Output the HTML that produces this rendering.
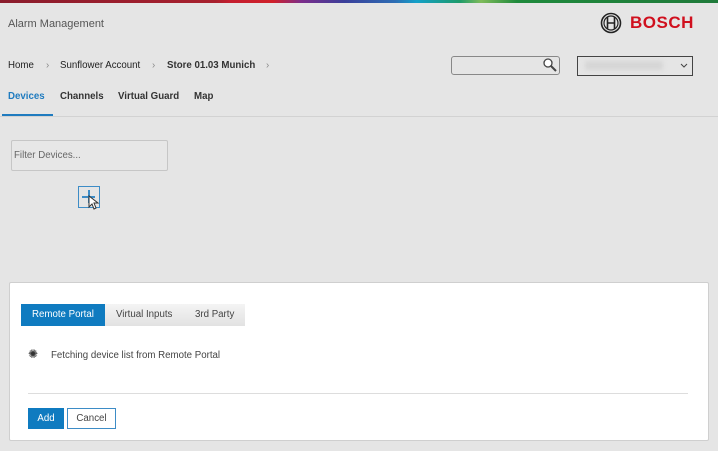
<!DOCTYPE html>
<html><head><style>
body{margin:0;width:718px;height:451px;background:#e5e5e5;font-family:"Liberation Sans",sans-serif;position:relative;overflow:hidden;font-size:9.7px;color:#222}
.a{position:absolute}
</style></head><body>
<div class="a" style="left:0;top:0;width:718px;height:3px;background:linear-gradient(90deg,#8a1c2c 0%,#a8202e 30%,#c41e2f 32%,#d0202a 38%,#7b2d8b 42%,#3a3f9a 48%,#2d6db4 55%,#14a0c8 58%,#1d9b6b 64%,#7fbb5a 67%,#1f8a3c 72%,#1f7a3a 100%)"></div>
<div class="a" style="left:8px;top:18px;font-size:11px;color:#555">Alarm Management</div>
<svg class="a" style="left:600px;top:12px" width="22" height="22" viewBox="0 0 22 22"><circle cx="11" cy="11" r="9.5" fill="none" stroke="#222" stroke-width="1.6"/><circle cx="11" cy="11" r="7" fill="none" stroke="#222" stroke-width="1.2"/><path d="M7.5 5v12M14.5 5v12M7.5 11h7" stroke="#222" stroke-width="1.6" fill="none"/></svg>
<div class="a" style="left:630px;top:13px;font-size:17px;font-weight:bold;color:#d0101e;letter-spacing:0.5px">BOSCH</div>
<div class="a" style="left:8px;top:60px">Home</div>
<div class="a" style="left:46px;top:60px;color:#888">›</div>
<div class="a" style="left:60px;top:60px">Sunflower Account</div>
<div class="a" style="left:152px;top:60px;color:#888">›</div>
<div class="a" style="left:167px;top:60px;font-weight:bold;color:#333">Store 01.03 Munich</div>
<div class="a" style="left:266px;top:60px;color:#888">›</div>
<div class="a" style="left:451px;top:56px;width:107px;height:17px;border:1px solid #888;border-radius:3px"></div>
<svg class="a" style="left:542px;top:57px" width="16" height="16" viewBox="0 0 16 16"><circle cx="6" cy="6" r="4" fill="#fff" stroke="#444" stroke-width="1.3"/><path d="M9 9l5 5" stroke="#444" stroke-width="2"/></svg>
<div class="a" style="left:577px;top:56px;width:114px;height:18px;border:1px solid #444"></div>
<div class="a" style="left:585px;top:61px;width:78px;height:9px;background:#d6d6d6;filter:blur(2px)"></div>
<svg class="a" style="left:680px;top:63px" width="8" height="5" viewBox="0 0 8 5"><path d="M1 1l3 3 3-3" fill="none" stroke="#444" stroke-width="1"/></svg>
<div class="a" style="left:8px;top:91px;font-weight:bold;color:#1f7bbf">Devices</div>
<div class="a" style="left:60px;top:91px;font-weight:bold;color:#333">Channels</div>
<div class="a" style="left:118px;top:91px;font-weight:bold;color:#333">Virtual Guard</div>
<div class="a" style="left:194px;top:91px;font-weight:bold;color:#333">Map</div>
<div class="a" style="left:2px;top:114px;width:51px;height:2px;background:#1f7bbf"></div>
<div class="a" style="left:0;top:116px;width:718px;height:1px;background:#d2d2d2"></div>
<div class="a" style="left:11px;top:140px;width:155px;height:29px;border:1px solid #c6c6c6;border-radius:2px;background:#e7e7e7"></div>
<div class="a" style="left:14px;top:150px;color:#666">Filter Devices...</div>
<div class="a" style="left:78px;top:186px;width:20px;height:20px;border:1px solid #3d8cc6"></div>
<div class="a" style="left:82px;top:196px;width:13px;height:1.5px;background:#3d8cc6"></div>
<div class="a" style="left:88px;top:190px;width:1.5px;height:13px;background:#3d8cc6"></div>
<svg class="a" style="left:88px;top:195px" width="12" height="16" viewBox="0 0 12 16"><path d="M1 1v11l3-3 2 5 2-1-2-5h4z" fill="#fff" stroke="#333" stroke-width="1"/></svg>
<div class="a" style="left:9px;top:282px;width:698px;height:157px;background:#fff;border:1px solid #cfcfcf;border-radius:2px"></div>
<div class="a" style="left:21px;top:304px;width:224px;height:22px;background:linear-gradient(#f4f4f4,#e2e2e2)"></div>
<div class="a" style="left:21px;top:304px;width:84px;height:22px;background:#0f7bc0"></div>
<div class="a" style="left:32px;top:309px;color:#fff">Remote Portal</div>
<div class="a" style="left:116px;top:309px;color:#444">Virtual Inputs</div>
<div class="a" style="left:195px;top:309px;color:#444">3rd Party</div>
<div class="a" style="left:28px;top:347px;font-size:12px;color:#333">✺</div>
<div class="a" style="left:51px;top:350px;color:#444">Fetching device list from Remote Portal</div>
<div class="a" style="left:28px;top:393px;width:660px;height:1px;background:#ddd"></div>
<div class="a" style="left:28px;top:408px;width:36px;height:21px;background:#0f7bc0;color:#fff;text-align:center;line-height:21px">Add</div>
<div class="a" style="left:67px;top:408px;width:47px;height:19px;border:1px solid #3d8cc6;color:#444;text-align:center;line-height:19px">Cancel</div>
</body></html>
